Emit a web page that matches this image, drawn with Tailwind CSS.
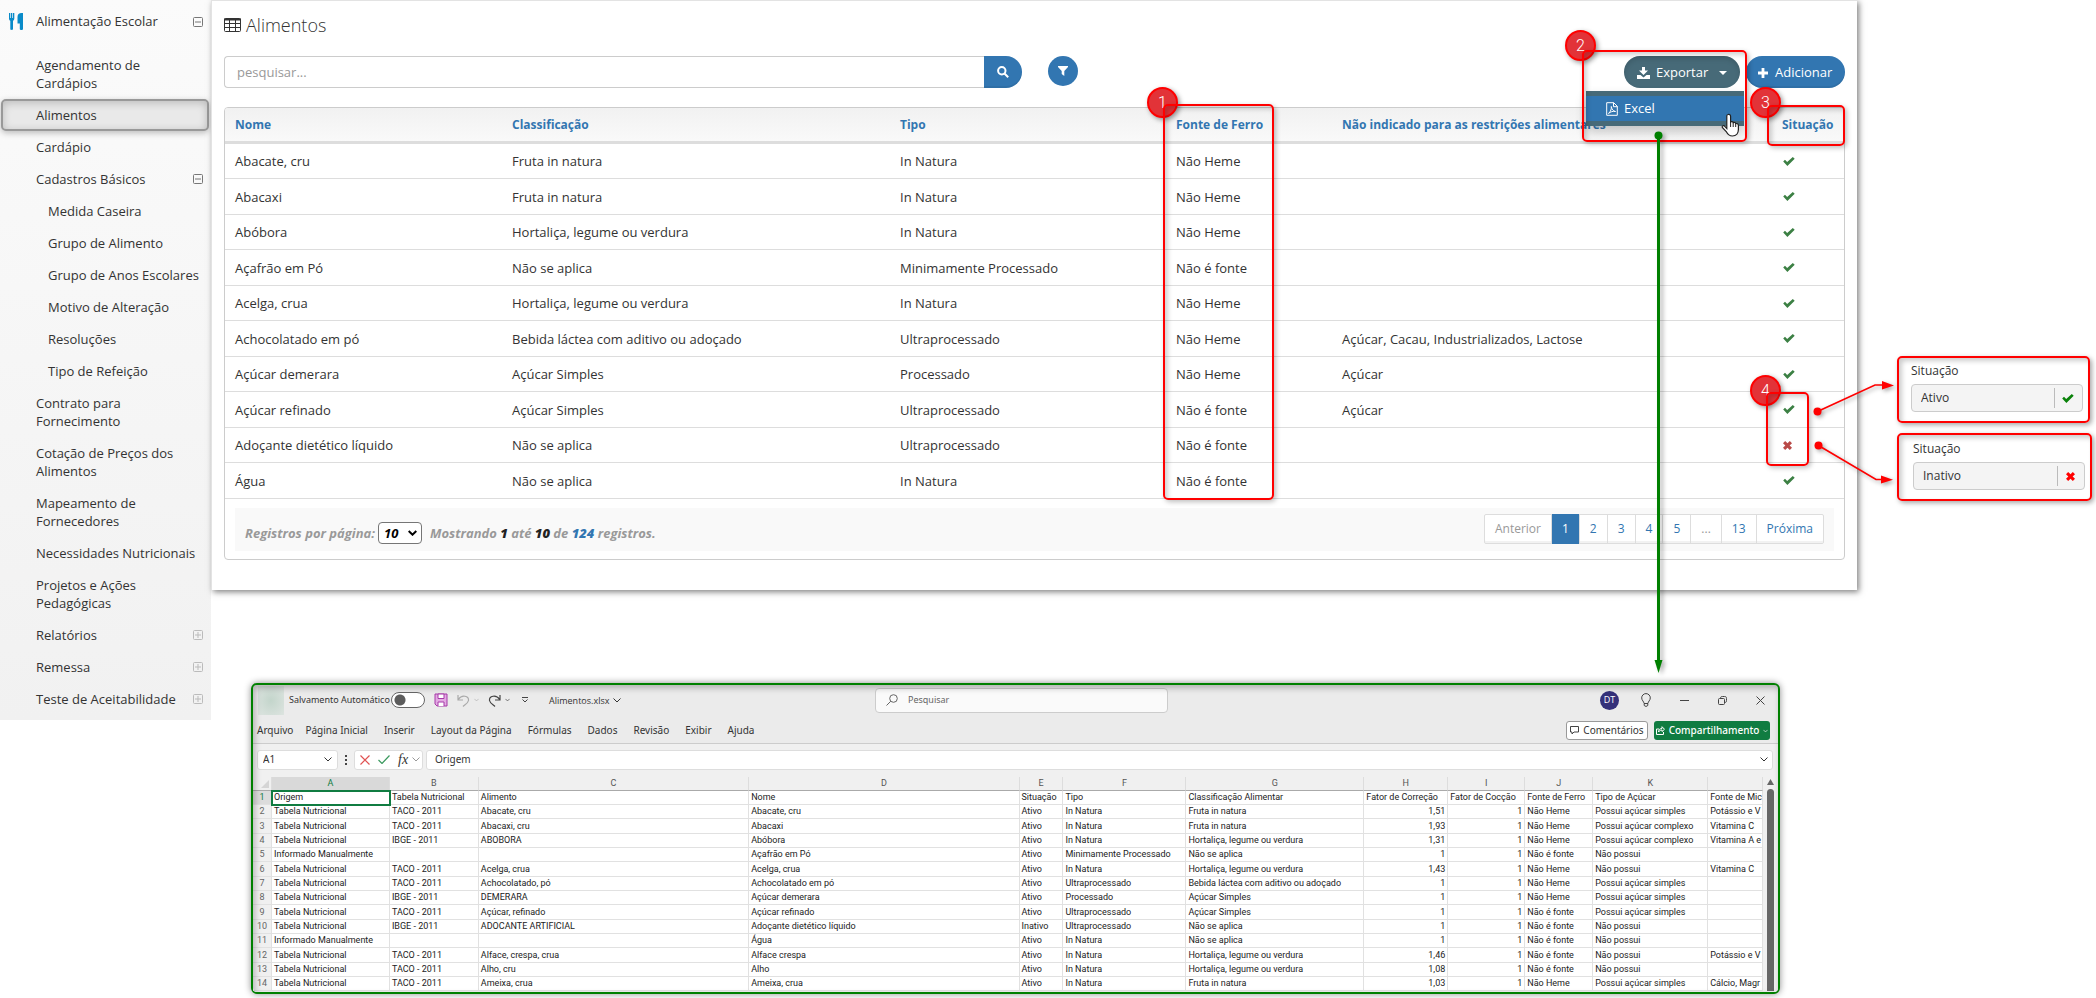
<!DOCTYPE html>
<html lang="pt-BR">
<head>
<meta charset="utf-8">
<title>Alimentos</title>
<script src="https://cdn.jsdelivr.net/npm/@tailwindcss/browser@4"></script>
</head>
<body class="relative min-h-screen overflow-x-hidden bg-white font-['Open_Sans','Noto_Sans',sans-serif] text-[13px] text-[#333]">
<svg class="hidden">
  <symbol id="check" viewBox="0 0 12 9"><path d="M0.2 4.6 2 2.8l2.2 2.1L9.8 0l1.9 1.7L4.4 9z" fill="currentColor"/></symbol>
  <symbol id="cross" viewBox="0 0 10 10"><path d="M2.4 0 5 2.600 7.600 0 10 2.400 7.400 5l2.600 2.600L7.600 10 5 7.400 2.400 10 0 7.600 2.600 5 0 2.400z" fill="currentColor"/></symbol>
  <symbol id="minusbox" viewBox="0 0 10 10"><rect x=".5" y=".5" width="9" height="9" rx="1" fill="none" stroke="currentColor"/><path d="M2 5h6" stroke="currentColor"/></symbol>
  <symbol id="plusbox" viewBox="0 0 10 10"><rect x=".5" y=".5" width="9" height="9" rx="1" fill="none" stroke="currentColor"/><path d="M2 5h6M5 2v6" stroke="currentColor"/></symbol>
  <symbol id="chev" viewBox="0 0 8 5"><path d="M.5.5 4 4 7.500.5" fill="none" stroke="currentColor"/></symbol>
</svg>

<div class="flex items-start">
  <nav class="w-[211px] shrink-0 bg-linear-to-b from-[#fbfbfb] to-[#f1f1f1] pb-[5px] leading-[18px]">
    <a href="#" class="flex h-[49px] items-start pt-3 pr-2 pl-[9px]">
      <svg class="mr-3 h-[18px] w-[15px] text-[#0a8bc9]" viewBox="0 0 15 18" fill="currentColor"><path d="M0 1h1.300v5H2V1h1.300v5H4V1h1.300v5.500c0 1.300-.6 1.900-1.300 2.300V17c0 1.200-2.700 1.200-2.700 0V8.800C.6 8.400 0 7.800 0 6.500zM14 1v16c0 1.300-3.200 1.300-3.200 0v-5.500H8.500V5c0-2.500 1.500-4 4-4z"/></svg>
      <span class="flex-1">Alimentação Escolar</span>
      <svg class="mt-[5px] size-[10px] text-[#777]"><use href="#minusbox"/></svg>
    </a>
    <a href="#" class="block py-[7px] pr-10 pl-9">Agendamento de Cardápios</a>
    <a href="#" class="mr-[2px] ml-px block h-8 rounded-[5px] border-2 border-[#999] bg-[#e9e9e9] py-[5px] pl-[33px] shadow-[inset_0_2px_8px_rgba(0,0,0,.2),0_2px_6px_rgba(0,0,0,.25)]">Alimentos</a>
    <a href="#" class="block py-[7px] pl-9">Cardápio</a>
    <a href="#" class="flex items-center justify-between py-[7px] pr-2 pl-9">Cadastros Básicos<svg class="size-[10px] text-[#777]"><use href="#minusbox"/></svg></a>
    <a href="#" class="block py-[7px] pl-12">Medida Caseira</a>
    <a href="#" class="block py-[7px] pl-12">Grupo de Alimento</a>
    <a href="#" class="block py-[7px] pl-12 whitespace-nowrap">Grupo de Anos Escolares</a>
    <a href="#" class="block py-[7px] pl-12">Motivo de Alteração</a>
    <a href="#" class="block py-[7px] pl-12">Resoluções</a>
    <a href="#" class="block py-[7px] pl-12">Tipo de Refeição</a>
    <a href="#" class="block py-[7px] pr-16 pl-9">Contrato para Fornecimento</a>
    <a href="#" class="block py-[7px] pr-8 pl-9">Cotação de Preços dos Alimentos</a>
    <a href="#" class="block py-[7px] pr-16 pl-9">Mapeamento de Fornecedores</a>
    <a href="#" class="block py-[7px] pl-9 whitespace-nowrap">Necessidades Nutricionais</a>
    <a href="#" class="block py-[7px] pr-16 pl-9">Projetos e Ações Pedagógicas</a>
    <a href="#" class="flex items-center justify-between py-[7px] pr-2 pl-9">Relatórios<svg class="size-[10px] text-[#bbb]"><use href="#plusbox"/></svg></a>
    <a href="#" class="flex items-center justify-between py-[7px] pr-2 pl-9">Remessa<svg class="size-[10px] text-[#bbb]"><use href="#plusbox"/></svg></a>
    <a href="#" class="flex items-center justify-between py-[7px] pr-2 pl-9">Teste de Aceitabilidade<svg class="size-[10px] text-[#bbb]"><use href="#plusbox"/></svg></a>
  </nav>

  <div class="min-w-0 flex-1">
    <div class="flex items-start">
      <main class="min-w-0 flex-1 border-t border-l border-[#e3e3e3] bg-white px-3 pt-3 pb-[30px] shadow-[2px_2px_6px_rgba(0,0,0,.5)]">
        <h1 class="flex h-6 items-center gap-[5px] text-[18px] leading-6 font-light text-[#333]">
          <svg class="h-[14px] w-[17px]" viewBox="0 0 17 14" fill="none" stroke="#333"><rect x=".5" y=".5" width="16" height="13" rx="1"/><path d="M0 1.500h17" stroke-width="2"/><path d="M0 5.500h17M0 9.500h17M5.500 0v14M11.500 0v14"/></svg>
          Alimentos
        </h1>
        <div class="mt-[19px] flex h-8 items-start">
          <div class="flex w-[798px]">
            <input type="text" aria-label="pesquisar" placeholder="pesquisar..." class="h-8 min-w-0 flex-1 rounded-l border border-r-0 border-[#ccc] px-3 placeholder:text-[#999]">
            <button aria-label="Buscar" class="flex h-8 w-[38px] items-center justify-center rounded-r-2xl bg-[#3276b1] text-white shadow-[inset_0_-2px_0_rgba(0,0,0,.06)]">
              <svg class="size-3" viewBox="0 0 12 12" fill="none" stroke="currentColor" stroke-width="2"><circle cx="4.800" cy="4.800" r="3.700"/><path d="m7.500 7.500 3.700 3.700"/></svg>
            </button>
          </div>
          <button aria-label="Filtrar" class="ml-[26px] flex size-[30px] items-center justify-center rounded-full bg-[#3276b1] text-white">
            <svg class="size-[10px]" viewBox="0 0 10 10" fill="currentColor"><path d="M0 0h10v1L6.300 5v5L3.700 8V5L0 1z"/></svg>
          </button>
          <div class="relative mr-[6px] ml-auto">
            <button class="flex h-8 w-[116px] items-center rounded-2xl bg-[#476a78] pt-px pl-[13px] text-white shadow-[inset_0_3px_5px_rgba(0,0,0,.125)]">
              <svg class="mr-[6px] h-3 w-[13px]" viewBox="0 0 13 12" fill="currentColor"><path d="M5 0h3v3.500h3L6.500 8 2 3.500h3zM0 8h3.500L6.500 10.500 9.500 8H13v4H0z"/></svg>
              Exportar
              <svg class="ml-[11px] h-1 w-2" viewBox="0 0 8 4" fill="currentColor"><path d="M0 0h8L4 4z"/></svg>
            </button>
            <div class="absolute top-[35px] -right-1 z-10 w-[158px] bg-[#476a78] py-[5px] shadow-[0_6px_12px_rgba(0,0,0,.2)]">
              <a href="#" class="flex h-[25px] items-center gap-[6px] bg-[#3276b1] pl-5 text-white">
                <svg class="h-[14px] w-3" viewBox="0 0 12 14" fill="none" stroke="currentColor"><path d="M.7.7h7l3.600 3.600v9H.7zM7.500.7v4h4"/><path d="M2.500 11.500C5 9 5.500 7 5.300 4.500 6 7.500 7 9 9.500 9.500 7 9 4.500 9.700 2.500 11.500z"/></svg>
                Excel
              </a>
            </div>
          </div>
          <button class="flex h-8 w-[99px] items-center rounded-2xl bg-[#3276b1] pt-px pl-3 text-white shadow-[inset_0_-2px_0_rgba(0,0,0,.06)]">
            <svg class="mr-[7px] size-[10px]" viewBox="0 0 10 10"><path d="M3.600 0h2.800v3.600H10v2.800H6.400V10H3.600V6.400H0V3.600h3.600z" fill="currentColor"/></svg>
            Adicionar
          </button>
        </div>

        <div class="mt-[19px] overflow-hidden rounded border border-[#ccc] pb-2">
          <table class="w-full table-fixed border-separate border-spacing-0 text-left">
            <colgroup><col class="w-[277px]"><col class="w-[388px]"><col class="w-[276px]"><col class="w-[166px]"><col><col class="w-[72px]"></colgroup>
            <thead>
              <tr class="h-9 bg-linear-to-b from-[#f1f1f1] to-[#fafafa] text-[12px] whitespace-nowrap text-[#3276b1] *:border-b-3 *:border-[#ddd] *:px-[10px]">
                <th>Nome</th><th>Classificação</th><th>Tipo</th><th>Fonte de Ferro</th><th>Não indicado para as restrições alimentares</th><th>Situação</th>
              </tr>
            </thead>
            <tbody id="foods"></tbody>
          </table>
          <div class="mx-[10px] mt-[9px] flex h-[43px] items-start justify-between bg-[#f9f9f9] px-[10px] text-[12px]">
            <div class="flex items-center pt-[13px] text-[13px] leading-6 font-bold text-[#999] italic">
              <label for="pp">Registros por página:</label>
              <span class="relative ml-[3px] flex items-center">
                <select id="pp" class="h-[22px] w-[44px] appearance-none rounded border border-[#767676] bg-white pl-[5px] leading-5 font-bold text-black italic"><option>10</option></select>
                <svg class="pointer-events-none absolute right-[5px] h-[6px] w-[9px]" viewBox="0 0 9 6"><path d="M.7 1 4.500 4.700 8.300 1" fill="none" stroke="#000" stroke-width="2"/></svg>
              </span>
              <span class="ml-2">Mostrando <b class="text-[#222]">1</b> até <b class="text-[#222]">10</b> de <b class="text-[#3276b1]">124</b> registros.</span>
            </div>
            <div class="mt-[6px] flex h-[30px] items-stretch divide-x divide-[#ddd] rounded-[2px] border border-[#ddd] bg-white text-[#3276b1] shadow-[inset_0_-2px_0_rgba(0,0,0,.05)] *:px-[10px]">
              <button class="text-[#999]">Anterior</button>
              <button class="-my-px bg-[#3276b1] text-white">1</button>
              <button>2</button><button>3</button><button>4</button><button>5</button>
              <button class="text-[#999]">...</button>
              <button>13</button><button>Próxima</button>
            </div>
          </div>
        </div>
      </main>

      <aside class="flex w-[239px] shrink-0 flex-col gap-[10px] pt-[356px] pr-1 pl-10 text-[12px]">
        <div class="mr-[2px] h-[67px] rounded-[5px] border-2 border-[#f00] pt-1 pl-3 shadow-[2px_2px_5px_rgba(0,0,0,.35),inset_3px_3px_5px_rgba(0,0,0,.2)]">
          <label for="s1" class="block h-[22px] leading-[18px]">Situação</label>
          <div class="flex h-7 w-[172px] items-center rounded border border-[#ccc] bg-[#f4f4f4] pr-2">
            <input id="s1" readonly value="Ativo" class="w-full min-w-0 flex-1 pl-[9px]">
            <span class="h-5 w-px bg-[#bbb]"></span>
            <svg class="ml-[7px] h-[9px] w-3 text-[#0a820a]"><use href="#check"/></svg>
          </div>
        </div>
        <div class="h-[68px] rounded-[5px] border-2 border-[#f00] pt-1 pl-[14px] shadow-[2px_2px_5px_rgba(0,0,0,.35),inset_3px_3px_5px_rgba(0,0,0,.2)]">
          <label for="s2" class="block h-[23px] leading-[20px]">Situação</label>
          <div class="flex h-7 w-[172px] items-center rounded border border-[#ccc] bg-[#f4f4f4] pr-2">
            <input id="s2" readonly value="Inativo" class="w-full min-w-0 flex-1 pl-[9px]">
            <span class="h-5 w-px bg-[#bbb]"></span>
            <svg class="mr-px ml-[8px] size-[9px] text-[#f00]" viewBox="0 0 10 10"><use href="#cross"/></svg>
          </div>
        </div>
      </aside>
    </div>

    <section class="relative mt-[93px] mr-[316px] ml-[40px] overflow-hidden rounded-md border-2 border-[#008000] bg-[#ebebeb] text-[#333] shadow-[0_0_7px_rgba(0,0,0,.45)]">
      <div class="grid h-[30px] grid-cols-[622px_293px_1fr] items-center text-[9px]">
        <div class="flex items-center pl-[5px]">
          <span class="mr-[5px] h-[29px] w-[26px] bg-[radial-gradient(#c3d5cb,#dde4e0)]"></span>
          <label for="auto" class="w-[102px] font-['Noto_Sans'] text-[9px] whitespace-nowrap">Salvamento Automático</label>
          <input id="auto" type="checkbox" class="h-4 w-[34px] appearance-none rounded-full border border-[#666] bg-white bg-[radial-gradient(circle_at_8px_7px,#5c5c5c_5px,transparent_6px)]">
          <svg class="ml-[9px] size-[14px]" viewBox="0 0 14 14" fill="#e3a9e3" stroke="#a63aa8"><path d="M1 1h12v12H3L1 11z"/><path d="M4 1h6v4.500H4zM4 13V9h6v4" fill="#fff"/></svg>
          <svg class="ml-[9px] h-[13px] w-[13px]" viewBox="0 0 13 13" fill="none" stroke="#aaa" stroke-width="1.200"><path d="M1 1v5h5M1.300 5.500C5 0 12 2 11.500 6.500 11 9 9 10 6 12.500"/></svg>
          <svg class="ml-1 h-[4px] w-[5px] text-[#aaa]" viewBox="0 0 8 5"><use href="#chev"/></svg>
          <svg class="ml-[9px] h-[13px] w-[13px]" viewBox="0 0 13 13" fill="none" stroke="#444" stroke-width="1.200"><path d="M12 1v5H7M11.700 5.500C8 0 1 2 1.500 6.500 2 9 4 10 7 12.500"/></svg>
          <svg class="ml-1 h-[4px] w-[5px]" viewBox="0 0 8 5"><use href="#chev"/></svg>
          <svg class="ml-3 h-[6px] w-[6px]" viewBox="0 0 6 6" fill="none" stroke="#444"><path d="M0 .5h6M.5 2.500 3 5l2.500-2.500"/></svg>
          <span class="ml-[21px] pt-px">Alimentos.xlsx</span>
          <svg class="ml-1 h-[5px] w-2" viewBox="0 0 8 5"><use href="#chev"/></svg>
        </div>
        <label class="flex h-[25px] items-center gap-2 rounded border border-[#ccc] bg-[#fafafa] pl-[10px]">
          <svg class="size-[12px]" viewBox="0 0 12 12" fill="none" stroke="#666"><circle cx="7.500" cy="4.500" r="3.800"/><path d="M4.800 7.200.5 11.500"/></svg>
          <input type="text" aria-label="Pesquisar" placeholder="Pesquisar" class="flex-1 pl-[2px] font-['Noto_Sans'] text-[9px] placeholder:text-[#666]">
        </label>
        <div class="flex items-center justify-end pr-[13px]">
          <span class="flex size-[19px] items-center justify-center rounded-full bg-[#34307a] text-[9px] text-white">DT</span>
          <button aria-label="Dicas" class="ml-[22px]"><svg class="h-[14px] w-[10px]" viewBox="0 0 10 14" fill="none" stroke="#444"><path d="M3 10.500C3 8.500.7 7.500.7 4.900a4.300 4.300 0 0 1 8.600 0C9.300 7.500 7 8.500 7 10.500zM3.200 11v1.200c0 1.500 3.600 1.500 3.600 0V11"/></svg></button>
          <button aria-label="Minimizar" class="ml-[29px]"><svg class="size-[9px]" viewBox="0 0 9 9"><path d="M0 4.500h9" stroke="#444"/></svg></button>
          <button aria-label="Restaurar" class="ml-[29px]"><svg class="size-[9px]" viewBox="0 0 9 9" fill="none" stroke="#444"><rect x=".5" y="2.500" width="6" height="6" rx="1"/><path d="M2.500 2.500c0-1.500.5-2 2-2h2c1.500 0 2 .5 2 2v2c0 1.500-.5 2-2 2"/></svg></button>
          <button aria-label="Fechar" class="ml-[29px]"><svg class="size-[9px]" viewBox="0 0 9 9" stroke="#444"><path d="m.5.5 8 8m0-8-8 8"/></svg></button>
        </div>
      </div>
      <div class="flex h-[29px] items-center border-b border-[#ccc] pt-[3px] pr-[8px] pl-1 font-['Noto_Sans'] text-[10px]">
        <div class="flex gap-4">
          <div class="flex gap-3"><button>Arquivo</button><button>Página Inicial</button></div><button>Inserir</button><button>Layout da Página</button><button>Fórmulas</button><button>Dados</button><button>Revisão</button><button>Exibir</button><button>Ajuda</button>
        </div>
        <button class="ml-auto flex h-[19px] w-[82px] items-center justify-center gap-1 rounded-[3px] border border-[#999] bg-white"><svg class="size-[9px]" viewBox="0 0 9 9" fill="none" stroke="#444"><path d="M.5.500h8v5.500H4L2 8V6H.5z"/></svg>Comentários</button>
        <button class="ml-[6px] flex h-[19px] w-[116px] items-center justify-center gap-1 rounded-[3px] bg-[#107c41] font-medium whitespace-nowrap text-white"><svg class="size-[9px] shrink-0" viewBox="0 0 9 9" fill="none" stroke="#fff"><path d="M3 3H.5v5.500h7V6M2.500 6c0-2.500 1.500-3.500 3.500-3.500V.7L8.500 3.300 6 5.500V4C4.500 4 3.500 4.500 2.500 6z"/></svg>Compartilhamento<svg class="h-[4px] w-[5px] shrink-0" viewBox="0 0 8 5"><use href="#chev"/></svg></button>
      </div>
      <div class="flex h-[33px] items-center bg-[#f0f0f0] pr-[5px] pb-[2px] pl-[4px] font-['Noto_Sans'] text-[10px]">
        <label class="flex h-[20px] w-[81px] items-center rounded-[3px] border border-[#ddd] bg-white px-[5px]"><input aria-label="Caixa de nome" value="A1" class="min-w-0 flex-1"><svg class="h-[5px] w-2" viewBox="0 0 8 5"><use href="#chev"/></svg></label>
        <svg class="mx-[7px] h-[10px] w-[2px]" viewBox="0 0 2 10" fill="#444"><path d="M0 0h2v2H0zM0 4h2v2H0zM0 8h2v2H0z"/></svg>
        <div class="flex h-[20px] w-[69px] items-center rounded-[3px] border border-[#ddd] bg-white pl-[5px]">
          <svg class="size-[10px]" viewBox="0 0 10 10" stroke="#e05252" stroke-width="1.200"><path d="m.5.5 9 9m0-9-9 9"/></svg>
          <svg class="ml-2 h-[9px] w-3" viewBox="0 0 12 9" fill="none" stroke="#3c9a5f" stroke-width="1.200"><path d="m.5 5 3.500 3.500 7.500-8"/></svg>
          <i class="ml-2 font-['Liberation_Serif'] text-[14px] leading-3">fx</i>
          <svg class="ml-1 h-[5px] w-2 text-[#999]" viewBox="0 0 8 5"><use href="#chev"/></svg>
        </div>
        <label class="ml-[3px] flex h-[20px] flex-1 items-center rounded-[3px] border border-[#ddd] bg-white pr-1 pl-2"><input aria-label="Barra de fórmulas" value="Origem" class="min-w-0 flex-1"><svg class="h-[5px] w-2" viewBox="0 0 8 5"><use href="#chev"/></svg></label>
      </div>
      <div class="flex bg-[#f0f0f0] pb-px">
        <table class="min-w-0 flex-1 table-fixed border-separate border-spacing-0 font-['Roboto'] text-[9px] leading-[13px] whitespace-nowrap text-[#222]">
          <colgroup><col class="w-[19px]"><col class="w-[118px]"><col class="w-[89px]"><col class="w-[271px]"><col class="w-[271px]"><col class="w-[44px]"><col class="w-[123px]"><col class="w-[178px]"><col class="w-[84px]"><col class="w-[77px]"><col class="w-[68px]"><col class="w-[115px]"><col></colgroup>
          <thead>
            <tr class="h-[14px] text-[#555] *:border-r *:border-b *:border-r-[#ddd] *:border-b-[#aaa] *:font-normal">
              <th><svg class="ml-2 size-2" viewBox="0 0 8 8"><path d="M8 0v8H0z" fill="#d5d5d5"/></svg></th><th class="bg-[#d9d9d9] text-[#107c41]">A</th><th>B</th><th>C</th><th>D</th><th>E</th><th>F</th><th>G</th><th>H</th><th>I</th><th>J</th><th>K</th><th></th>
            </tr>
          </thead>
          <tbody id="sheet"></tbody>
        </table>
        <div class="flex w-[15px] flex-col items-center pt-[2px]">
          <svg class="h-[6px] w-[7px]" viewBox="0 0 7 6"><path d="M3.500 0 7 6H0z" fill="#666"/></svg>
          <span class="mt-1 w-[7px] flex-1 rounded-t-full bg-[#666]"></span>
        </div>
      </div>
      <div class="pointer-events-none absolute inset-0 rounded shadow-[inset_2px_3px_6px_rgba(0,0,0,.25)]"></div>
    </section>
  </div>
</div>

<!-- Callouts over the screen -->
<div class="pointer-events-none absolute inset-x-0 top-0 z-20 h-[720px] font-['Roboto'] text-[16px] font-light text-white">
  <span class="absolute top-[87px] left-[1147px] flex size-[31px] items-center justify-center rounded-full border-2 border-[#f00] bg-[#e23338] shadow-[2px_2px_5px_rgba(0,0,0,.4)]">1</span>
  <div class="absolute top-[104px] left-[1163px] h-[396px] w-[111px] rounded-[5px] border-2 border-[#f00] shadow-[2px_2px_5px_rgba(0,0,0,.25),inset_3px_3px_5px_rgba(0,0,0,.18)]"></div>
  <span class="absolute top-[30px] right-[500px] flex size-[31px] items-center justify-center rounded-full border-2 border-[#f00] bg-[#e23338] shadow-[2px_2px_5px_rgba(0,0,0,.4)]">2</span>
  <div class="absolute top-[50px] right-[349px] h-[92px] w-[165px] rounded-[5px] border-2 border-[#f00] shadow-[2px_2px_5px_rgba(0,0,0,.25),inset_3px_3px_5px_rgba(0,0,0,.18)]"></div>
  <span class="absolute top-[87px] right-[315px] flex size-[31px] items-center justify-center rounded-full border-2 border-[#f00] bg-[#e23338] shadow-[2px_2px_5px_rgba(0,0,0,.4)]">3</span>
  <div class="absolute top-[105px] right-[251px] h-[41px] w-[78px] rounded-[5px] border-2 border-[#f00] shadow-[2px_2px_5px_rgba(0,0,0,.25),inset_3px_3px_5px_rgba(0,0,0,.18)]"></div>
  <span class="absolute top-[375px] right-[315px] flex size-[31px] items-center justify-center rounded-full border-2 border-[#f00] bg-[#e23338] shadow-[2px_2px_5px_rgba(0,0,0,.4)]">4</span>
  <div class="absolute top-[392px] right-[287px] h-[74px] w-[43px] rounded-[5px] border-2 border-[#f00] shadow-[2px_2px_5px_rgba(0,0,0,.25),inset_3px_3px_5px_rgba(0,0,0,.18)]"></div>
  <svg class="absolute top-[370px] right-[196px] h-[130px] w-[100px] drop-shadow-[2px_2px_2px_rgba(0,0,0,.35)]" viewBox="0 0 100 130" fill="#f00">
    <circle cx="17.500" cy="41.500" r="4"/><path d="M17.500 41.500 75 15h10" fill="none" stroke="#f00" stroke-width="1.700"/><path d="M82 11l12 4.500L82 19.500z"/>
    <circle cx="18.500" cy="75.500" r="4"/><path d="M18.500 75.500 76 109.500h8" fill="none" stroke="#f00" stroke-width="1.700"/><path d="M81 105.500l12 4.300L81 113.500z"/>
  </svg>
  <svg class="absolute top-[128px] right-[427px] h-[550px] w-5 drop-shadow-[3px_2px_2px_rgba(0,0,0,.3)]" viewBox="0 0 20 550" fill="#008000">
    <circle cx="9.500" cy="7.500" r="4"/><path d="M8 8h3v528H8z"/><path d="M5.500 532h8l-4 13z"/>
  </svg>
  <svg class="absolute top-[113px] right-[355px] h-6 w-[20px]" viewBox="0 0 20 24"><path d="M7 1.500c1.700-.5 2.600.5 2.600 2V9c1-.8 2.300-.3 2.600.6 1-.5 2.200 0 2.500 1 1.200-.4 2.700.3 2.700 1.900v4c0 3.500-2 6.500-6 6.500-3.500 0-4.700-1.500-6.200-4.500L1.300 14.500c-.6-1.700 1.300-2.400 2.500-1.200L5.800 15.500V3c0-.8.4-1.300 1.200-1.500z" fill="#fff" stroke="#222" stroke-width="1.200"/><path d="M9.600 9v5M12.200 9.800V14M14.700 10.800V14" stroke="#222"/></svg>
</div>

<script>
const foods = [
  ['Abacate, cru','Fruta in natura','In Natura','Não Heme','',1],
  ['Abacaxi','Fruta in natura','In Natura','Não Heme','',1],
  ['Abóbora','Hortaliça, legume ou verdura','In Natura','Não Heme','',1],
  ['Açafrão em Pó','Não se aplica','Minimamente Processado','Não é fonte','',1],
  ['Acelga, crua','Hortaliça, legume ou verdura','In Natura','Não Heme','',1],
  ['Achocolatado em pó','Bebida láctea com aditivo ou adoçado','Ultraprocessado','Não Heme','Açúcar, Cacau, Industrializados, Lactose',1],
  ['Açúcar demerara','Açúcar Simples','Processado','Não Heme','Açúcar',1],
  ['Açúcar refinado','Açúcar Simples','Ultraprocessado','Não é fonte','Açúcar',1],
  ['Adoçante dietético líquido','Não se aplica','Ultraprocessado','Não é fonte','',0],
  ['Água','Não se aplica','In Natura','Não é fonte','',1]
];
document.getElementById('foods').innerHTML = foods.map(r =>
  '<tr class="odd:h-[35px] even:h-[36px] *:border-b *:border-[#ddd] *:px-[10px] *:leading-5">' +
  r.slice(0,5).map(c => `<td>${c}</td>`).join('') +
  '<td>' + (r[5] ? '<svg role="img" aria-label="Ativo" class="ml-px h-[9px] w-3 text-[#3c8044]" viewBox="0 0 12 9"><use href="#check"/></svg>'
                 : '<svg role="img" aria-label="Inativo" class="ml-px size-[9px] text-[#b94a48]" viewBox="0 0 10 10"><use href="#cross"/></svg>') + '</td></tr>').join('');

const T = 'Tabela Nutricional', M = 'Informado Manualmente', H = 'Hortaliça, legume ou verdura', N = 'In Natura', U = 'Ultraprocessado';
const sheet = [
  ['Origem','Tabela Nutricional','Alimento','Nome','Situação','Tipo','Classificação Alimentar','Fator de Correção','Fator de Cocção','Fonte de Ferro','Tipo de Açúcar','Fonte de Mic'],
  [T,'TACO - 2011','Abacate, cru','Abacate, cru','Ativo',N,'Fruta in natura','1,51','1','Não Heme','Possui açúcar simples','Potássio e V'],
  [T,'TACO - 2011','Abacaxi, cru','Abacaxi','Ativo',N,'Fruta in natura','1,93','1','Não Heme','Possui açúcar complexo','Vitamina C'],
  [T,'IBGE - 2011','ABOBORA','Abóbora','Ativo',N,H,'1,31','1','Não Heme','Possui açúcar complexo','Vitamina A e'],
  [M,'','','Açafrão em Pó','Ativo','Minimamente Processado','Não se aplica','1','1','Não é fonte','Não possui',''],
  [T,'TACO - 2011','Acelga, crua','Acelga, crua','Ativo',N,H,'1,43','1','Não Heme','Não possui','Vitamina C'],
  [T,'TACO - 2011','Achocolatado, pó','Achocolatado em pó','Ativo',U,'Bebida láctea com aditivo ou adoçado','1','1','Não Heme','Possui açúcar simples',''],
  [T,'IBGE - 2011','DEMERARA','Açúcar demerara','Ativo','Processado','Açúcar Simples','1','1','Não Heme','Possui açúcar simples',''],
  [T,'TACO - 2011','Açúcar, refinado','Açúcar refinado','Ativo',U,'Açúcar Simples','1','1','Não é fonte','Possui açúcar simples',''],
  [T,'IBGE - 2011','ADOCANTE ARTIFICIAL','Adoçante dietético líquido','Inativo',U,'Não se aplica','1','1','Não é fonte','Não possui',''],
  [M,'','','Água','Ativo',N,'Não se aplica','1','1','Não é fonte','Não possui',''],
  [T,'TACO - 2011','Alface, crespa, crua','Alface crespa','Ativo',N,H,'1,46','1','Não é fonte','Não possui','Potássio e V'],
  [T,'TACO - 2011','Alho, cru','Alho','Ativo',N,H,'1,08','1','Não é fonte','Não possui',''],
  [T,'TACO - 2011','Ameixa, crua','Ameixa, crua','Ativo',N,'Fruta in natura','1,03','1','Não Heme','Possui açúcar simples','Cálcio, Magr']
];
document.getElementById('sheet').innerHTML = sheet.map((r, i) =>
  '<tr class="h-[14px] nth-[3n]:h-[15px] bg-white *:border-r *:border-b *:border-[#e1e1e1]">' +
  `<th class="${i ? 'bg-[#f0f0f0] font-normal text-[#666]' : 'bg-[#dcdcdc] font-normal text-[#107c41]'}">${i + 1}</th>` +
  r.map((c, j) => `<td class="${i && (j === 7 || j === 8) ? 'pr-[2px] text-right' : i === 0 && j === 0 ? 'pl-[2px] outline-2 -outline-offset-1 outline-[#107c41]' : 'pl-[2px] overflow-hidden'}">${c}</td>`).join('') + '</tr>').join('');
</script>
</body>
</html>
